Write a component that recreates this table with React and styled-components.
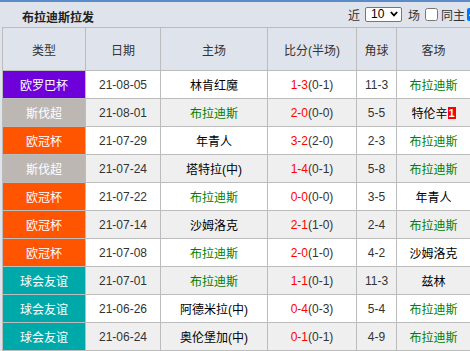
import React from "react";
import styled, { createGlobalStyle } from "styled-components";

const Global = createGlobalStyle`
  html, body { margin: 0; padding: 0; background: #fff; overflow: hidden; }
  body { font-family: "Liberation Sans", "Noto Sans CJK SC", sans-serif; font-size: 12px; color: #333; }
`;

const Page = styled.div`
  width: 488px;
  background: #dfe4ec;
`;

const TopBar = styled.div`
  height: 25px;
  border-top: 2px solid #5b8bc9;
  display: flex;
  align-items: center;
  padding: 0 8px 0 22px;
  background: #dfe4ec;
`;

const Title = styled.div`
  font-weight: bold;
  font-size: 12px;
  color: #222;
  padding-top: 4px;
`;

const Controls = styled.div`
  margin-left: auto;
  display: flex;
  align-items: center;
  font-size: 12px;
  color: #333;
`;

const Label = styled.span`
  margin-left: ${(p) => p.$ml || 0}px;
`;

const SelectWrap = styled.div`
  position: relative;
  margin-left: 5px;
  width: 37px;
  height: 15px;
`;

const Select = styled.select`
  appearance: none;
  -webkit-appearance: none;
  width: 37px;
  height: 15px;
  box-sizing: border-box;
  border: 1px solid #767676;
  border-radius: 2px;
  background: #fff;
  font-family: "Liberation Sans", sans-serif;
  font-size: 12px;
  color: #000;
  padding: 0 0 0 5px;
  line-height: 13px;
  margin: 0;
`;

const Chevron = styled.svg`
  position: absolute;
  right: 4px;
  top: 4px;
  pointer-events: none;
`;

const Check = styled.input`
  width: 13px;
  height: 13px;
  margin: 0 0 0 ${(p) => p.$ml || 0}px;
  flex-shrink: 0;
`;

const Table = styled.div`
  margin-left: 2px;
  border-left: 1px solid #bcbcbc;
  border-top: 1px solid #bcbcbc;
  background: #fff;
`;

const Row = styled.div`
  display: grid;
  grid-template-columns: 83px 75px 107px 89px 40px 74px;
  height: ${(p) => (p.$head ? 43 : 28)}px;
  background: ${(p) => (p.$head ? "#dfe4ec" : p.$alt ? "#efefef" : "#fff")};
`;

const Cell = styled.div`
  border-right: 1px solid #bcbcbc;
  border-bottom: 1px solid #bcbcbc;
  display: flex;
  align-items: center;
  justify-content: center;
  white-space: nowrap;
  font-size: 12px;
  color: ${(p) => p.$color || "#333"};
  background: ${(p) => p.$bg || "transparent"};
`;

const Red = styled.span`
  color: #ff0000;
`;

const Card = styled.span`
  display: inline-block;
  background: #ff0000;
  color: #fff;
  font-weight: bold;
  font-size: 11px;
  line-height: 12px;
  height: 12px;
  width: 8px;
  text-align: center;
`;

const typeColors = {
  "欧罗巴杯": "#6e00d9",
  "斯伐超": "#bdb7b4",
  "欧冠杯": "#ff5400",
  "球会友谊": "#00a9a9",
};

const HOME = "布拉迪斯";
const rows = [
  ["欧罗巴杯", "21-08-05", "林肯红魔", "1-3", "(0-1)", "11-3", HOME],
  ["斯伐超", "21-08-01", HOME, "2-0", "(0-0)", "5-5", "特伦辛", 1],
  ["欧冠杯", "21-07-29", "年青人", "3-2", "(2-0)", "2-3", HOME],
  ["斯伐超", "21-07-24", "塔特拉(中)", "1-4", "(0-1)", "5-8", HOME],
  ["欧冠杯", "21-07-22", HOME, "0-0", "(0-0)", "3-5", "年青人"],
  ["欧冠杯", "21-07-14", "沙姆洛克", "2-1", "(1-0)", "2-4", HOME],
  ["欧冠杯", "21-07-08", HOME, "2-0", "(1-0)", "4-2", "沙姆洛克"],
  ["球会友谊", "21-07-01", HOME, "1-1", "(0-1)", "11-3", "兹林"],
  ["球会友谊", "21-06-26", "阿德米拉(中)", "0-4", "(0-3)", "5-4", HOME],
  ["球会友谊", "21-06-24", "奥伦堡加(中)", "0-1", "(0-1)", "4-9", HOME],
];

const teamColor = (t) => (t === HOME ? "#008000" : "#000");

export default function App() {
  return (
    <>
      <Global />
      <Page>
        <TopBar>
          <Title>布拉迪斯拉发</Title>
          <Controls>
            <Label>近</Label>
            <SelectWrap>
              <Select defaultValue="10">
                <option value="10">10</option>
                <option value="20">20</option>
              </Select>
              <Chevron width="8" height="6" viewBox="0 0 8 6">
                <path d="M0.8 1 L4 4.4 L7.2 1" fill="none" stroke="#000" strokeWidth="1.8" />
              </Chevron>
            </SelectWrap>
            <Label $ml={6}>场</Label>
            <Check type="checkbox" $ml={5} />
            <Label $ml={3}>同主</Label>
            <Check type="checkbox" defaultChecked $ml={2} />
          </Controls>
        </TopBar>
        <Table>
          <Row $head>
            <Cell>类型</Cell>
            <Cell>日期</Cell>
            <Cell>主场</Cell>
            <Cell>比分(半场)</Cell>
            <Cell>角球</Cell>
            <Cell>客场</Cell>
          </Row>
          {rows.map((r, i) => (
            <Row key={i} $alt={i % 2 === 1}>
              <Cell $bg={typeColors[r[0]]} $color="#fff">{r[0]}</Cell>
              <Cell>{r[1]}</Cell>
              <Cell $color={teamColor(r[2])}>{r[2]}</Cell>
              <Cell>
                <Red>{r[3]}</Red>
                {r[4]}
              </Cell>
              <Cell>{r[5]}</Cell>
              <Cell $color={teamColor(r[6])}>
                {r[6]}
                {r[7] ? <Card>{r[7]}</Card> : null}
              </Cell>
            </Row>
          ))}
        </Table>
      </Page>
    </>
  );
}
